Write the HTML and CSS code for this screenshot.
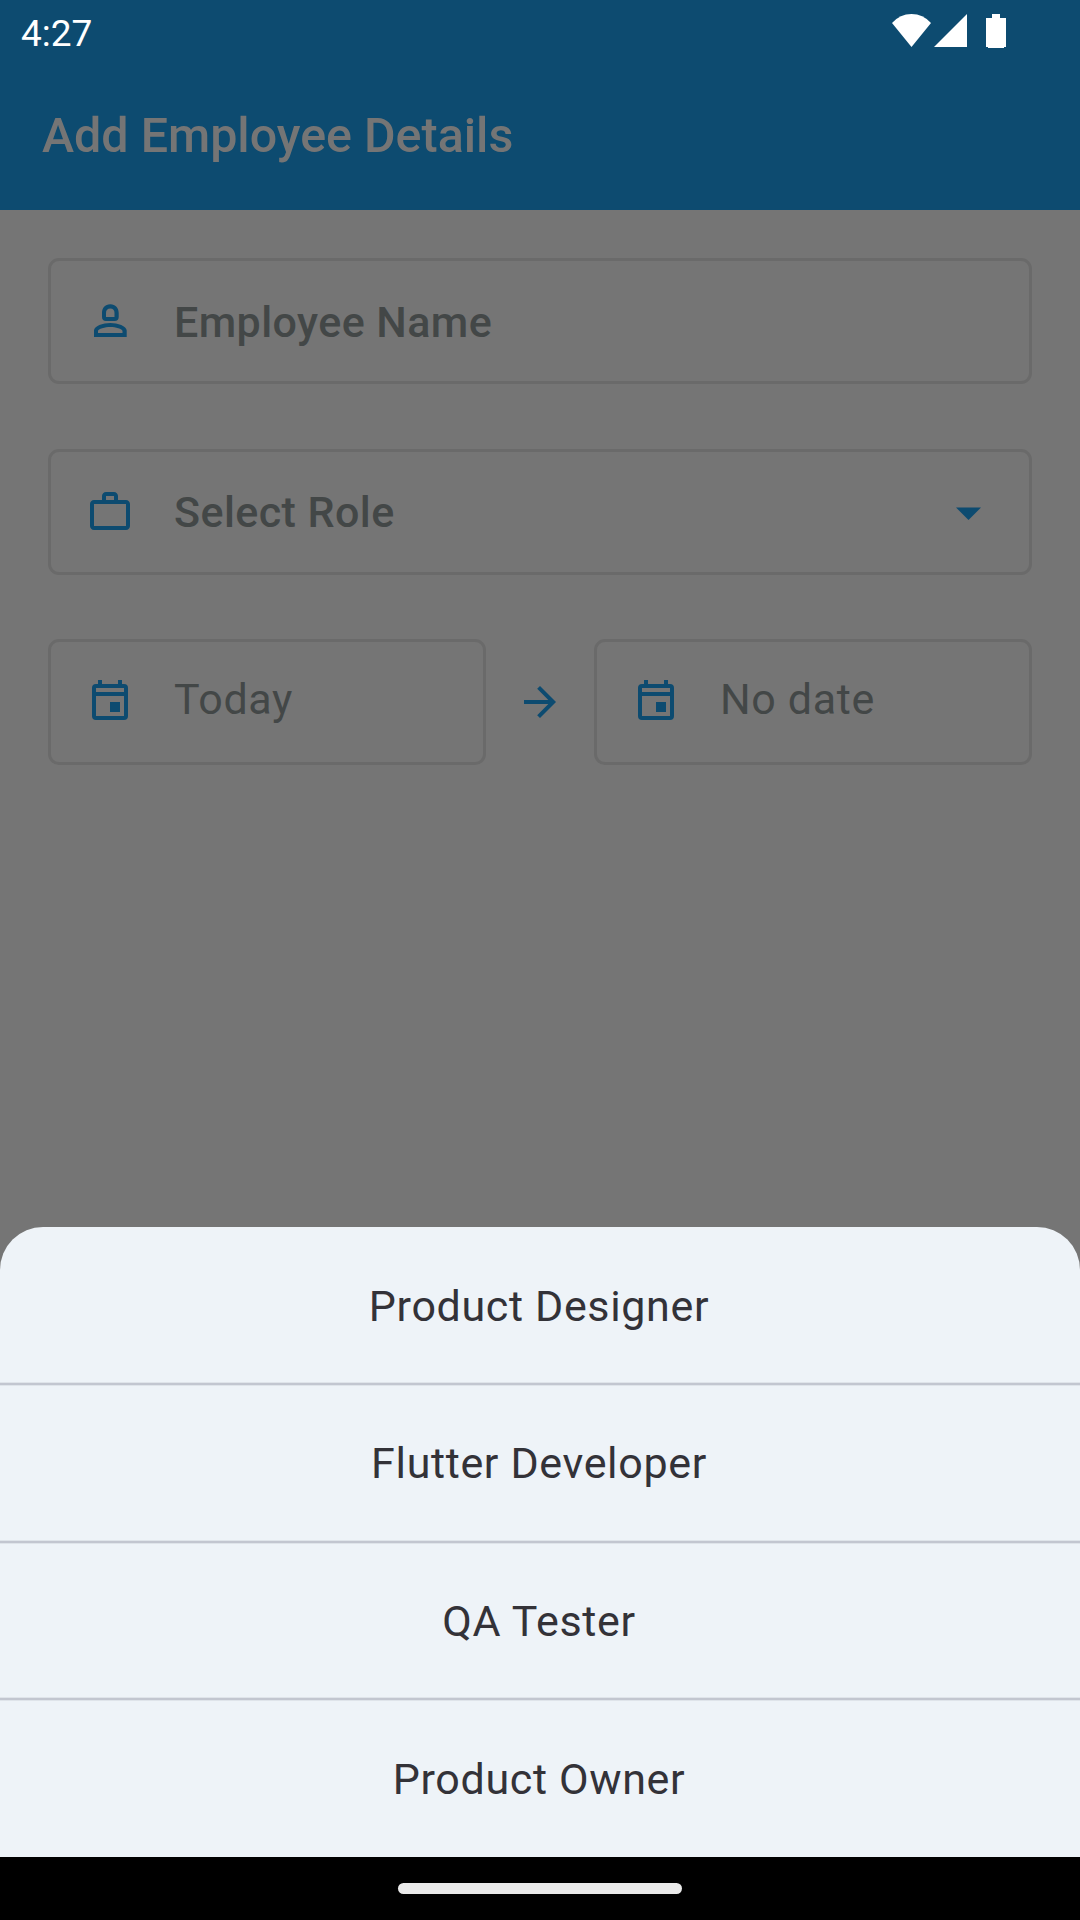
FILE: index.html
```html
<!DOCTYPE html>
<html lang="en">
<head>
<meta charset="utf-8">
<title>Add Employee Details</title>
<link rel="stylesheet" href="styles.css">
</head>
<body>
<div class="status">
  <span class="clock">4:27</span>
  <svg width="116" height="36" viewBox="0 0 116 36" fill="#fff"><path d="M0 9Q8 0 19.500 0T39 9L19.500 33Z"/><path d="M42 33H75V0Z"/><path d="M94 4H100V0H108V4H114V33H112V34H96V33H94Z"/></svg>
</div>
<header class="appbar"><h1>Add Employee Details</h1></header>
<main class="form">
  <div class="field name">
    <svg class="icon" width="48" height="48" viewBox="0 0 48 48"><path fill-rule="evenodd" d="M24.300 7.300C19 7.300 16 11 16 16V20C16 22.500 17.500 24 20 24H28.700C31.200 24 32.700 22.500 32.700 20V16C32.700 11 29.500 7.300 24.300 7.300ZM20 20V16C20 13 21.500 11.500 24.300 11.500S28.500 13 28.500 16V20ZM8 40V33.500C8 29 17 26 24.300 26S40.700 29 40.700 33.500V40ZM12 36H36.500V34C36.500 32 29.500 30 24.300 30S12 32 12 34Z"/></svg>
    <span class="label strong">Employee Name</span>
  </div>
  <div class="field role">
    <svg class="icon" width="48" height="48" viewBox="0 0 24 24"><path fill-rule="evenodd" d="M14 6V4H10V6ZM4 8V19H20V8ZM20 6C21.110 6 22 6.890 22 8V19C22 20.110 21.110 21 20 21H4C2.890 21 2 20.110 2 19V8C2 6.890 2.890 6 4 6H8V4C8 2.890 8.890 2 10 2H14C15.110 2 16 2.890 16 4V6Z"/></svg>
    <span class="label strong">Select Role</span>
    <svg class="icon caret" width="25" height="13" viewBox="0 0 25 13"><path d="M0 .5H25L12.500 13Z"/></svg>
  </div>
  <div class="dates">
    <div class="field">
      <svg class="icon" width="48" height="48" viewBox="0 0 48 48"><use href="#cal"/></svg>
      <span class="label">Today</span>
    </div>
    <svg class="icon" width="48" height="48" viewBox="0 0 24 24"><path d="M12 4l-1.410 1.410L16.170 11H4v2h12.170l-5.580 5.590L12 20l8-8z"/></svg>
    <div class="field">
      <svg class="icon" width="48" height="48" viewBox="0 0 48 48"><path id="cal" fill-rule="evenodd" d="M12 2H16V6H32V2H36V6H38Q42 6 42 10V38Q42 42 38 42H10Q6 42 6 38V10Q6 6 10 6H12ZM10 10V14H38V10ZM10 18V38H38V18ZM24 24H34V34H24Z"/></svg>
      <span class="label">No date</span>
    </div>
  </div>
</main>
<ul class="sheet">
  <li>Product Designer</li>
  <li>Flutter Developer</li>
  <li>QA Tester</li>
  <li>Product Owner</li>
</ul>
<nav class="navbar"><div class="handle"></div></nav>
</body>
</html>
```
FILE: styles.css
```css
* { box-sizing: border-box; }
body { margin: 0; width: 1080px; height: 1920px; display: flex; flex-direction: column; background: #757575; font-family: Roboto, sans-serif; overflow: hidden; }
.status { height: 63px; background: #0d4b70; display: flex; justify-content: space-between; padding: 14px 72px 0 21px; color: #fff; font-size: 37px; line-height: 39px; }
.appbar { height: 147px; background: #0d4b70; padding: 45px 42px 0; color: #757575; }
.appbar h1 { margin: 0; font-size: 48.4px; line-height: 56px; font-weight: 500; }
.form { flex: 1; padding: 48px 48px 0; display: flex; flex-direction: column; }
.field { height: 126px; border: 3px solid #6a6a6a; border-radius: 11px; display: flex; align-items: center; padding: 0 48px 0 35px; }
.icon { fill: #0d4b70; flex: none; }
.label { margin-left: 40px; padding-bottom: 6px; color: #434747; font-size: 43px; line-height: 50px; letter-spacing: .65px; }
.strong { font-weight: 500; letter-spacing: .42px; padding: 2px 0 0; }
.name { margin-bottom: 65px; }
.role { margin-bottom: 64px; }
.role .label { padding-top: 0; }
.caret { margin: 3px 0 0 auto; }
.dates { display: flex; align-items: center; justify-content: space-between; }
.dates .field { width: 438px; }
.sheet { margin: 0; padding: 0; list-style: none; height: 629.6px; background: #eef3f8; border-radius: 43px 43px 0 0; }
.sheet li { height: 157px; display: flex; align-items: center; justify-content: center; padding: 0 2px 0 0; font-size: 43px; line-height: 50px; letter-spacing: .65px; color: #333238; }
.sheet li:first-child { height: 155.6px; padding-top: 2px; }
.sheet li:nth-child(2) { height: 158px; }
.sheet li:last-child { height: 159px; }
.sheet li + li { border-top: 2px solid #c2c6d0; box-shadow: 0 -1px #dfe4ea, inset 0 1px #dfe4ea; }
.navbar { height: 63px; background: #000; display: flex; align-items: center; justify-content: center; }
.handle { width: 284px; height: 11px; border-radius: 5.5px; background: #eaeaea; }
```
